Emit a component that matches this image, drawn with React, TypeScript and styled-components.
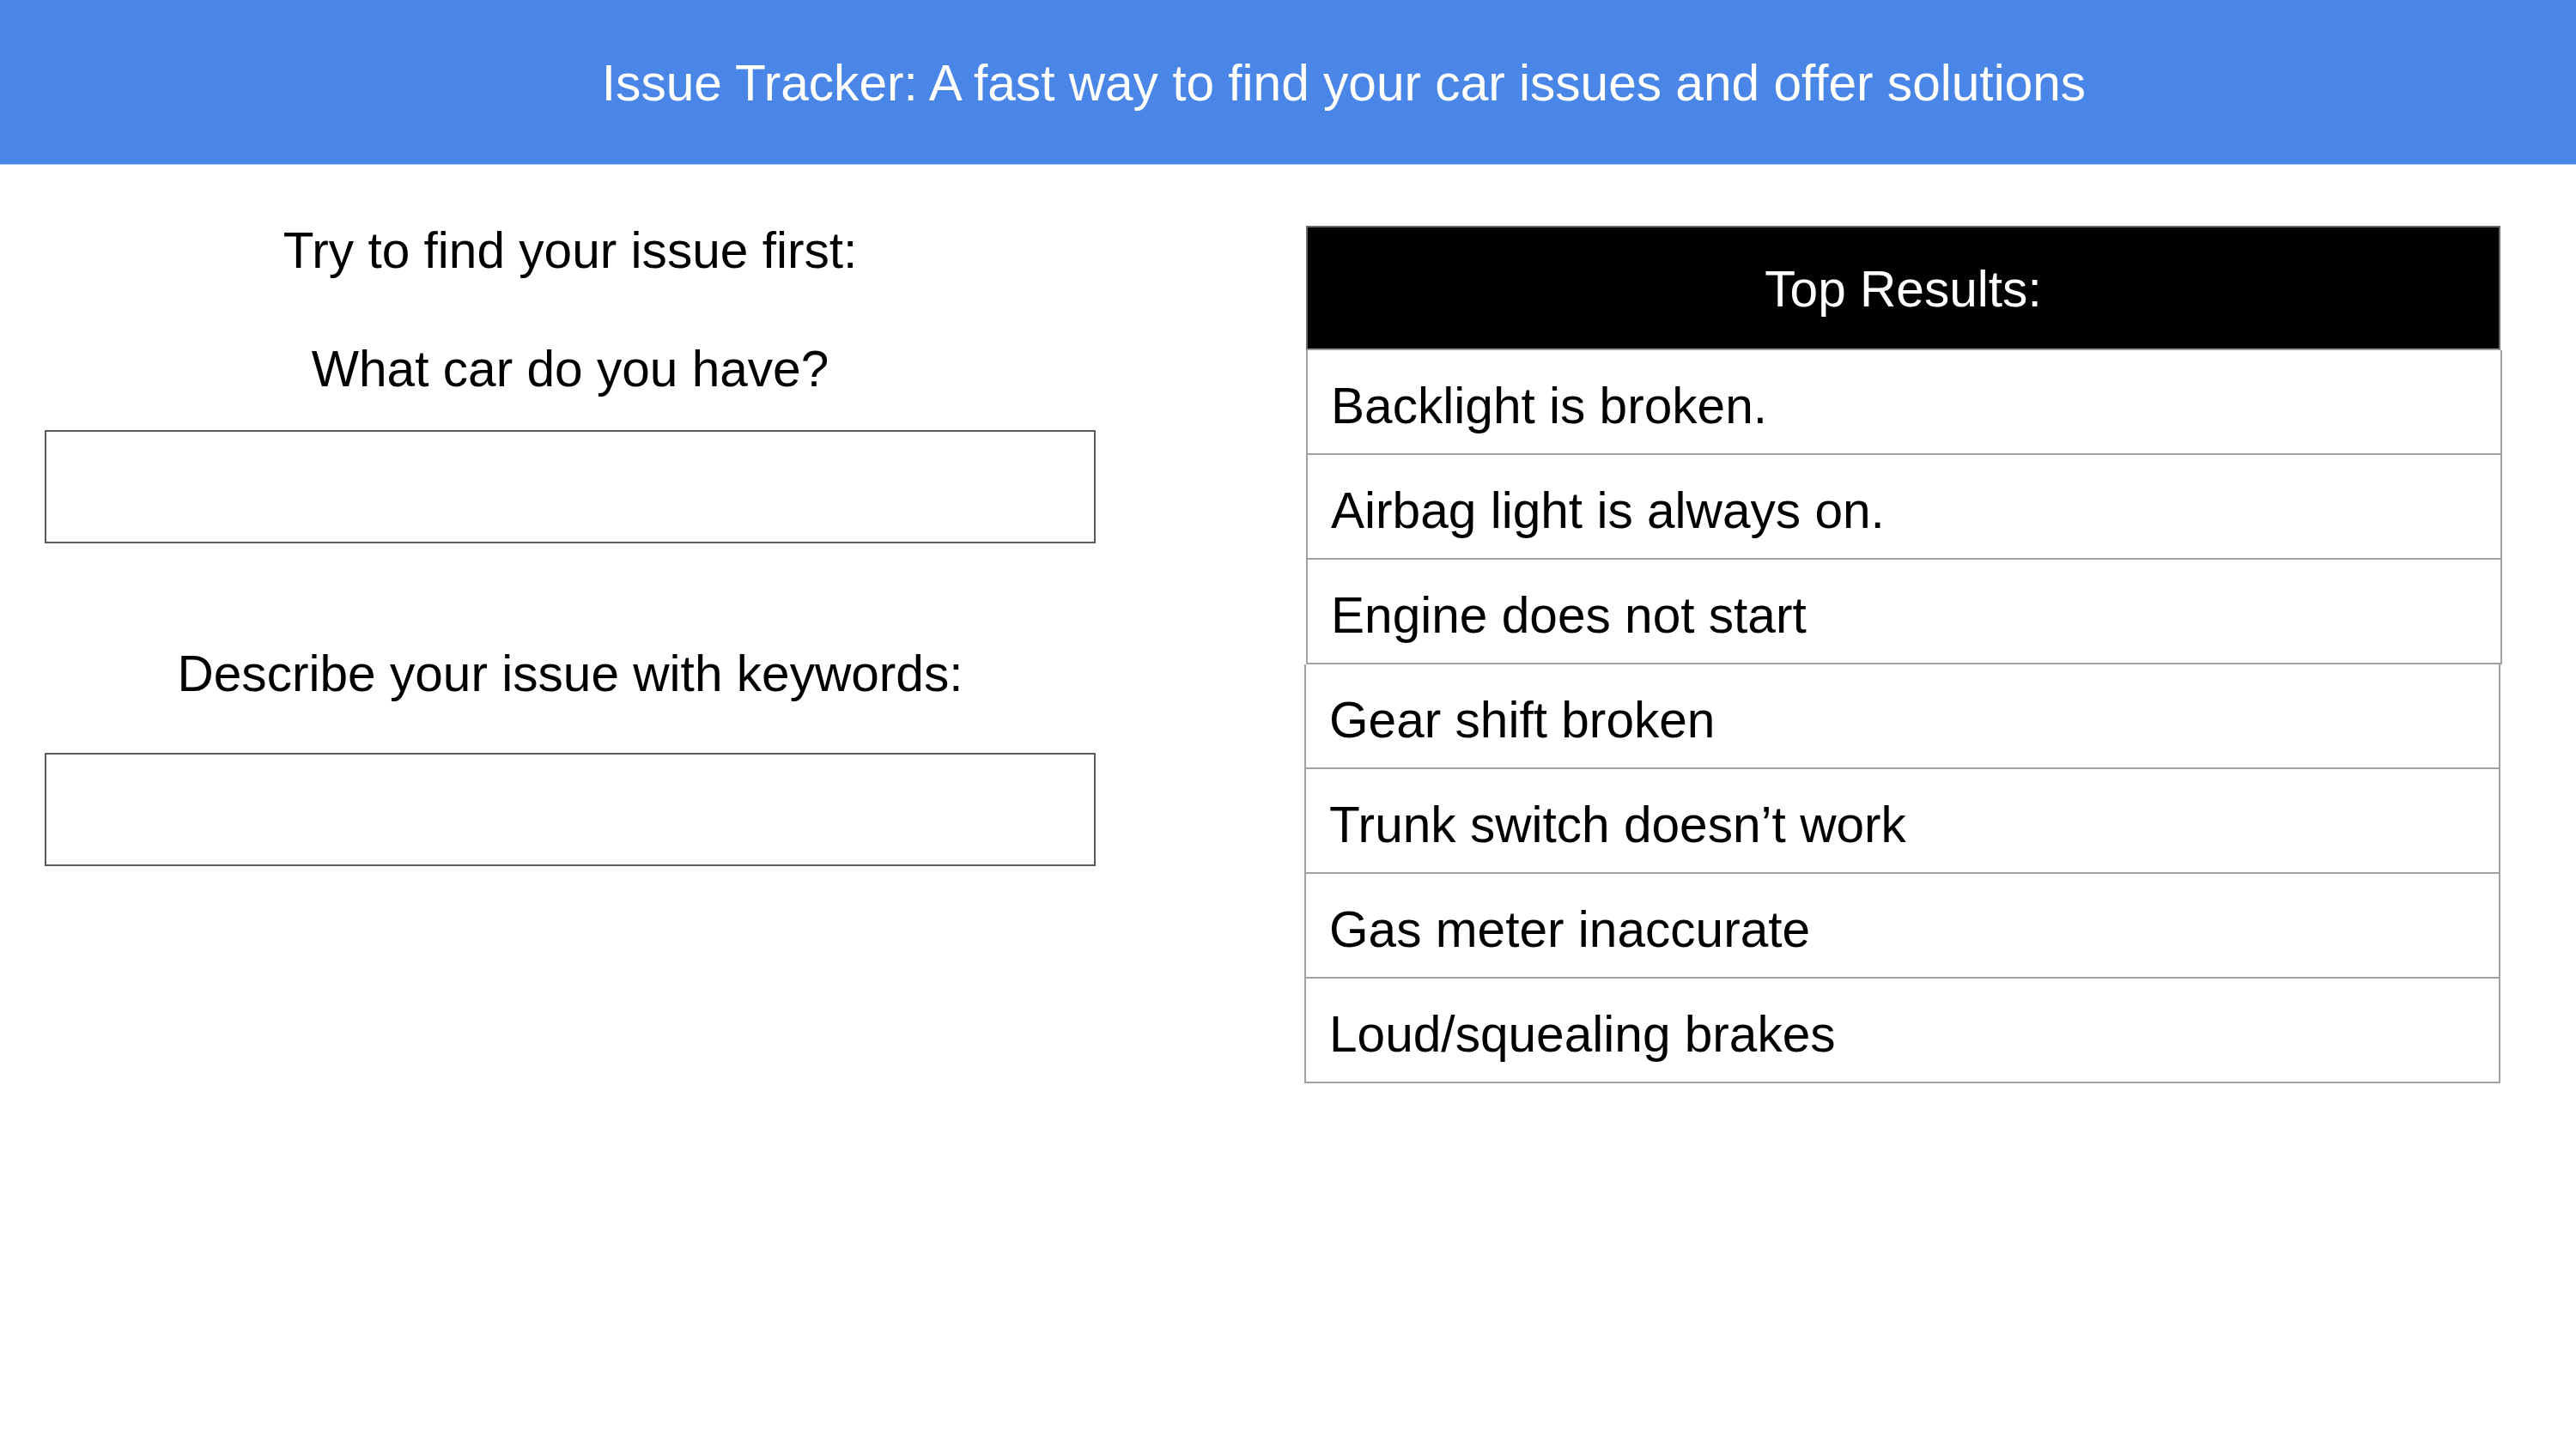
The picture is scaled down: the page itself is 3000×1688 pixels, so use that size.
import React from 'react';
import styled, { createGlobalStyle } from 'styled-components';

const GlobalStyle = createGlobalStyle`
    html, body {
        margin: 0;
        padding: 0;
        background: #ffffff;
    }
    body {
        font-family: "Liberation Sans", Arial, sans-serif;
        color: #000000;
    }
    * {
        box-sizing: border-box;
    }
`;

const Page = styled.div`
    width: 3000px;
    min-height: 1688px;
    background: #ffffff;
`;

const TopBar = styled.header`
    height: 192px;
    background-color: #4a86e8;
    border-bottom: 1px solid #a4c2f4;
    display: flex;
    align-items: center;
    justify-content: center;
    padding-left: 130px;
    padding-top: 2px;
`;

const TopTitle = styled.h1`
    margin: 0;
    font-size: 58.6px;
    font-weight: 400;
    line-height: 66px;
    color: #ffffff;
`;

const Main = styled.main`
    display: flex;
    align-items: flex-start;
`;

// left side: search form
const SearchColumn = styled.section`
    margin-left: 52px;
    width: 1224px;
    display: flex;
    flex-direction: column;
`;

const Prompt = styled.p<{ $top: number }>`
    margin: ${({ $top }) => `${$top}px`} 0 0;
    font-size: 58.6px;
    line-height: 66px;
    text-align: center;
`;

const Field = styled.input<{ $top: number }>`
    margin-top: ${({ $top }) => `${$top}px`};
    width: 100%;
    height: 132px;
    border: 2px solid #5c5c5c;
    border-radius: 0;
    background: #ffffff;
    padding: 0 24px;
    font-family: inherit;
    font-size: 58px;
    outline: none;
`;

// right side: results table
const ResultsColumn = styled.section`
    margin-left: 245px;
    margin-top: 71px;
    width: 1391px;
    display: flex;
    flex-direction: column;
`;

const ResultsHead = styled.div`
    height: 145px;
    background-color: #000000;
    border: 2px solid #6a6a6a;
    border-bottom-color: #999999;
    display: flex;
    align-items: center;
    justify-content: center;
    color: #ffffff;
    font-size: 58.6px;
    line-height: 66px;
    padding-top: 2px;
`;

const ResultRow = styled.div<{ $shift: number }>`
    height: 122px;
    margin-left: ${({ $shift }) => `${$shift}px`};
    width: 1393px;
    border: 2px solid #a0a0a0;
    border-top: none;
    padding: 32px 0 0 27px;
    font-size: 58.6px;
    line-height: 66px;
    white-space: nowrap;
`;

const results = [
    'Backlight is broken.',
    'Airbag light is always on.',
    'Engine does not start',
    'Gear shift broken',
    'Trunk switch doesn\u2019t work',
    'Gas meter inaccurate',
    'Loud/squealing brakes',
];

const App: React.FC = () => {
    return (
        <Page>
            <GlobalStyle />
            <TopBar>
                <TopTitle>Issue Tracker: A fast way to find your car issues and offer solutions</TopTitle>
            </TopBar>
            <Main>
                <SearchColumn>
                    <Prompt $top={67}>Try to find your issue first:</Prompt>
                    <Prompt $top={72}>What car do you have?</Prompt>
                    <Field $top={38} type="text" aria-label="Car" />
                    <Prompt $top={119}>Describe your issue with keywords:</Prompt>
                    <Field $top={59} type="text" aria-label="Keywords" />
                </SearchColumn>
                <ResultsColumn>
                    <ResultsHead>Top Results:</ResultsHead>
                    {results.map((item, i) => (
                        <ResultRow key={item} $shift={i < 3 ? 0 : -2}>
                            {item}
                        </ResultRow>
                    ))}
                </ResultsColumn>
            </Main>
        </Page>
    );
};

export default App;
